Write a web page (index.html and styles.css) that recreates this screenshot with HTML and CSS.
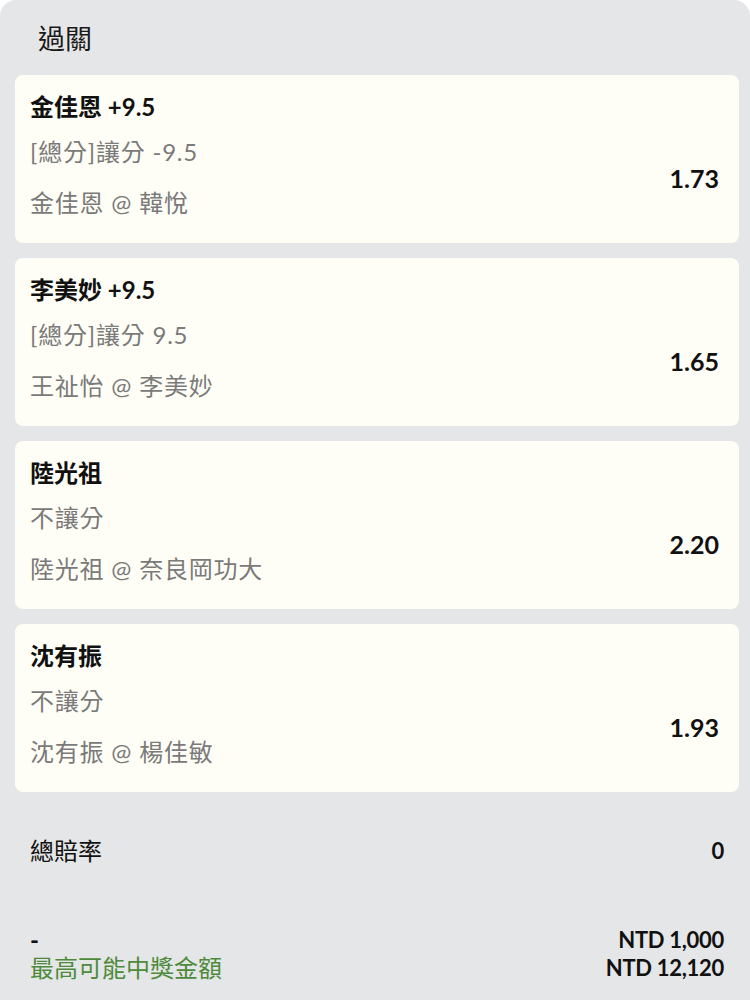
FILE: index.html
```html
<!DOCTYPE html>
<html lang="zh-Hant">
<head>
    <meta charset="UTF-8">
    <meta name="viewport" content="width=device-width, initial-scale=1.0">
    <title>過關</title>
    <link rel="stylesheet" href="styles.css">
</head>
<body>
    <div class="sheet">
        <h1 class="sheet-title">過關</h1>
        <div class="bets">
            <div class="bet">
                <div class="bet-pick">金佳恩 +9.5</div>
                <div class="bet-body">
                    <div class="bet-info">
                        <div class="bet-market">[總分]讓分 -9.5</div>
                        <div class="bet-match">金佳恩 @ 韓悅</div>
                    </div>
                    <div class="bet-odds">1.73</div>
                </div>
            </div>
            <div class="bet">
                <div class="bet-pick">李美妙 +9.5</div>
                <div class="bet-body">
                    <div class="bet-info">
                        <div class="bet-market">[總分]讓分 9.5</div>
                        <div class="bet-match">王祉怡 @ 李美妙</div>
                    </div>
                    <div class="bet-odds">1.65</div>
                </div>
            </div>
            <div class="bet">
                <div class="bet-pick">陸光祖</div>
                <div class="bet-body">
                    <div class="bet-info">
                        <div class="bet-market">不讓分</div>
                        <div class="bet-match">陸光祖 @ 奈良岡功大</div>
                    </div>
                    <div class="bet-odds">2.20</div>
                </div>
            </div>
            <div class="bet">
                <div class="bet-pick">沈有振</div>
                <div class="bet-body">
                    <div class="bet-info">
                        <div class="bet-market">不讓分</div>
                        <div class="bet-match">沈有振 @ 楊佳敏</div>
                    </div>
                    <div class="bet-odds">1.93</div>
                </div>
            </div>
        </div>
        <div class="summary">
            <div class="summary-row">
                <span>總賠率</span>
                <span class="summary-value">0</span>
            </div>
            <div class="payout">
                <div class="payout-row">
                    <span class="payout-stake">-</span>
                    <span class="summary-value">NTD 1,000</span>
                </div>
                <div class="payout-row">
                    <span class="payout-label">最高可能中獎金額</span>
                    <span class="summary-value">NTD 12,120</span>
                </div>
            </div>
        </div>
    </div>
</body>
</html>
```

FILE: styles.css
```css
body {
    margin: 0;
    padding: 0;
    background: #fff;
    font-family: 'Lato', 'Noto Sans CJK TC', sans-serif;
    color: #111;
}
.sheet {
    background: #e5e6e8;
    border-radius: 16px 16px 0 0;
    height: 1000px;
    overflow: hidden;
}
.sheet-title {
    margin: 0;
    padding: 21px 0 0 38px;
    height: 54px;
    box-sizing: border-box;
    font-size: 27px;
    font-weight: 400;
    line-height: 36px;
    color: #1a1a1a;
}
.bets {
    display: flex;
    flex-direction: column;
    gap: 15px;
    margin: 21px 11px 0 15px;
}
.bet {
    background: #fffef6;
    border-radius: 8px;
    height: 168px;
    box-sizing: border-box;
    padding: 17px 20px 0 15px;
    font-size: 24px;
}
.bet-pick {
    font-weight: 700;
    line-height: 30px;
}
.bet-body {
    display: flex;
    align-items: center;
    justify-content: space-between;
    margin-top: 15px;
}
.bet-info {
    display: flex;
    flex-direction: column;
    gap: 21px;
    color: #7a7a7a;
    line-height: 30px;
    letter-spacing: 0.8px;
}
.bet-odds {
    font-weight: 700;
    font-size: 25px;
}
.summary {
    padding: 0 26px 0 30px;
    font-size: 24px;
}
.summary-row {
    display: flex;
    justify-content: space-between;
    margin-top: 44px;
    line-height: 30px;
}
.summary-value {
    font-weight: 700;
    font-size: 22px;
    letter-spacing: -0.3px;
}
.payout {
    margin-top: 60px;
}
.payout-row {
    display: flex;
    justify-content: space-between;
    line-height: 28px;
}
.payout-stake {
    font-weight: 700;
}
.payout-label {
    color: #4e8a3c;
}
```
